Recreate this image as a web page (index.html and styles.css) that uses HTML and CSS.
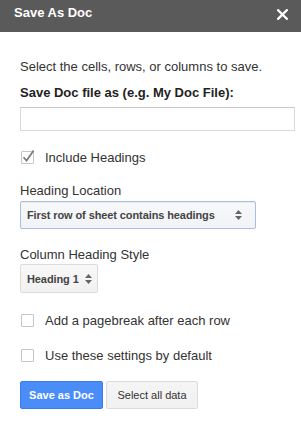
FILE: index.html
```html
<!DOCTYPE html>
<html>
<head>
<meta charset="utf-8">
<link rel="stylesheet" href="styles.css">
</head>
<body>
<div class="titlebar">
  <span class="title">Save As Doc</span>
  <svg class="close" width="11" height="11" viewBox="0 0 11 11"><path d="M1.2 1.2 L9.8 9.8 M9.8 1.2 L1.2 9.8" stroke="#fff" stroke-width="2.3" stroke-linecap="square"/></svg>
</div>
<div class="content">
  <p class="intro">Select the cells, rows, or columns to save.</p>
  <div class="field-label">Save Doc file as (e.g. My Doc File):</div>
  <input class="text-input" type="text">
  <div class="check-row first-check">
    <span class="checkbox">
      <svg class="tick" width="16" height="16" viewBox="0 0 16 16"><path d="M2.5 8.2 L5.6 11.6 L12.6 1.6" fill="none" stroke="#7a7a7a" stroke-width="1.7"/></svg>
    </span>
    <span class="check-text">Include Headings</span>
  </div>
  <div class="label label-location">Heading Location</div>
  <div class="select select-wide">
    <span class="select-text">First row of sheet contains headings</span>
    <svg class="arrows" width="7" height="10" viewBox="0 0 7 10"><path d="M3.5 0 L7 4 L0 4 Z M0 6 L7 6 L3.5 10 Z" fill="#666"/></svg>
  </div>
  <div class="label label-style">Column Heading Style</div>
  <div class="select select-small">
    <span class="select-text">Heading 1</span>
    <svg class="arrows" width="7" height="10" viewBox="0 0 7 10"><path d="M3.5 0 L7 4 L0 4 Z M0 6 L7 6 L3.5 10 Z" fill="#666"/></svg>
  </div>
  <div class="check-row page-check">
    <span class="checkbox"></span>
    <span class="check-text">Add a pagebreak after each row</span>
  </div>
  <div class="check-row default-check">
    <span class="checkbox"></span>
    <span class="check-text">Use these settings by default</span>
  </div>
  <div class="buttons">
    <button class="btn btn-action">Save as Doc</button>
    <button class="btn btn-plain">Select all data</button>
  </div>
</div>
</body>
</html>
```
FILE: styles.css
```css
html, body {
  margin: 0;
  padding: 0;
  background: #fff;
}
body {
  width: 301px;
  height: 424px;
  overflow: hidden;
  font-family: "Liberation Sans", Arial, sans-serif;
  color: #333;
}
.titlebar {
  height: 32px;
  box-sizing: border-box;
  background: #5a5a5a;
  display: flex;
  justify-content: space-between;
  align-items: flex-start;
  padding: 5px 13px 0 14px;
}
.title {
  color: #fff;
  font-weight: bold;
  font-size: 13px;
  line-height: 16px;
}
.close {
  margin-top: 4px;
  display: block;
}
.content {
  padding: 27px 6px 0 20px;
  font-size: 13px;
  line-height: 16px;
}
.intro {
  margin: 0;
}
.field-label {
  margin-top: 10px;
  font-weight: bold;
  color: #222;
}
.text-input {
  display: block;
  box-sizing: border-box;
  width: 275px;
  height: 24px;
  margin: 6px 0 0 0;
  border: 1px solid #d9d9d9;
  border-top-color: #c8c8c8;
  border-radius: 1px;
  background: #fff;
  padding: 0 6px;
  outline: none;
}
.check-row {
  display: flex;
  align-items: flex-start;
}
.first-check { margin-top: 19px; }
.page-check { margin-top: 20px; }
.default-check { margin-top: 19px; }
.checkbox {
  position: relative;
  box-sizing: border-box;
  width: 13px;
  height: 13px;
  margin: 1px 11px 0 1px;
  border: 1px solid #c6c6c6;
  border-radius: 1px;
  background: #fff;
  flex: none;
}
.tick {
  position: absolute;
  left: -1px;
  top: -3px;
}
.label-location { margin-top: 17px; }
.label-style { margin-top: 18px; }
.select {
  box-sizing: border-box;
  display: flex;
  align-items: center;
  justify-content: space-between;
  border: 1px solid #dcdcdc;
  border-radius: 2px;
  background: linear-gradient(#f8f8f8, #f1f1f1);
  font-size: 11px;
  font-weight: bold;
  letter-spacing: -0.1px;
  color: #444;
  padding: 0 13px 0 6px;
  white-space: nowrap;
}
.select-wide {
  width: 236px;
  height: 28px;
  margin-top: 2px;
  border-color: #a8bfe0;
  background: linear-gradient(#f7f8fa, #f1f3f6);
  box-shadow: inset 0 1px 1px rgba(0,0,0,0.06);
}
.select-small {
  width: 78px;
  height: 29px;
  margin-top: 1px;
  padding-right: 5px;
}
.arrows {
  display: block;
  flex: none;
}
.buttons {
  margin-top: 17px;
  display: flex;
  gap: 3px;
}
.btn {
  box-sizing: border-box;
  height: 28px;
  border-radius: 2px;
  font-family: "Liberation Sans", Arial, sans-serif;
  font-size: 11px;
  padding: 0;
  margin: 0;
  white-space: nowrap;
  text-align: center;
}
.btn-action {
  width: 83px;
  background: #4a8df8;
  border: 1px solid #3b7de8;
  color: #fff;
  font-weight: bold;
}
.btn-plain {
  width: 92px;
  background: linear-gradient(#f5f5f5, #f1f1f1);
  border: 1px solid #dcdcdc;
  color: #333;
  font-weight: normal;
}
```
